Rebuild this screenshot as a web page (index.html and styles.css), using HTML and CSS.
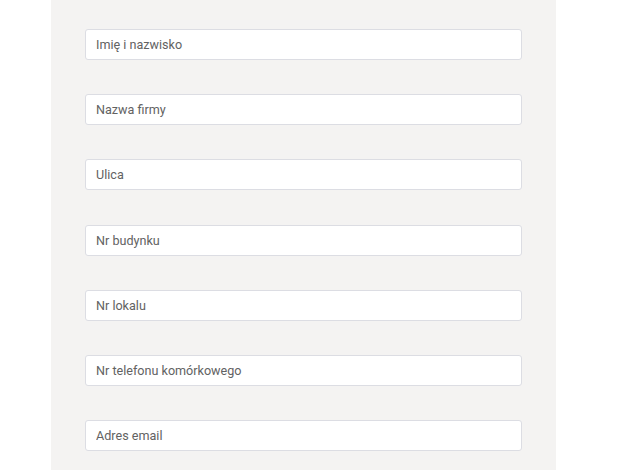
FILE: index.html
```html
<!DOCTYPE html>
<html lang="pl">
<head>
<meta charset="utf-8">
<title>Formularz</title>
<link rel="stylesheet" href="styles.css">
</head>
<body>
<div class="panel">
  <form class="form">
    <input class="field" type="text" placeholder="Imię i nazwisko">
    <input class="field" type="text" placeholder="Nazwa firmy">
    <input class="field" type="text" placeholder="Ulica">
    <input class="field" type="text" placeholder="Nr budynku">
    <input class="field" type="text" placeholder="Nr lokalu">
    <input class="field" type="text" placeholder="Nr telefonu komórkowego">
    <input class="field" type="text" placeholder="Adres email">
  </form>
</div>
</body>
</html>
```
FILE: styles.css
```css
html, body {
  margin: 0;
  padding: 0;
  background: #ffffff;
  overflow: hidden;
}
body {
  height: 470px;
}
.panel {
  margin-left: 50.5px;
  width: 505.5px;
  height: 470px;
  background: #f4f3f2;
  box-sizing: border-box;
  padding: 29px 34px 0 34.5px;
}
.form {
  display: flex;
  flex-direction: column;
  gap: 34.2px;
}
.field {
  box-sizing: border-box;
  width: 437px;
  height: 31px;
  margin: 0;
  padding: 0 10px;
  border: 1px solid #dcdde3;
  border-radius: 3px;
  background: #ffffff;
  font-family: Roboto, "Liberation Sans", sans-serif;
  font-size: 12.6px;
  color: #555;
  outline: none;
}
.field::placeholder {
  color: #626262;
  opacity: 1;
}
```
